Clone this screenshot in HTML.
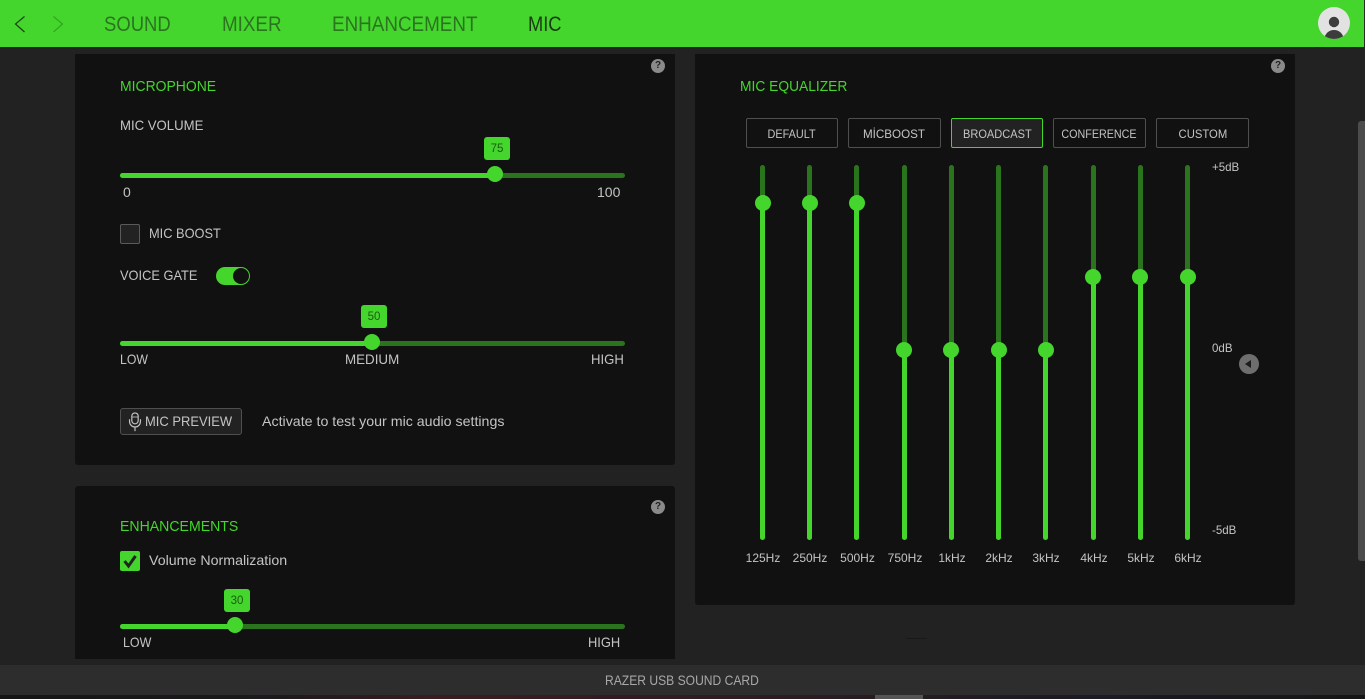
<!DOCTYPE html>
<html>
<head>
<meta charset="utf-8">
<style>
html,body{margin:0;padding:0;width:1365px;height:699px;overflow:hidden;background:#222;}
body{position:relative;font-family:"Liberation Sans",sans-serif;color:#c4c4c4;}
div,svg{position:absolute;}
.t{white-space:nowrap;font-size:14px;line-height:16px;transform-origin:0 50%;}
.nav{font-size:21px;line-height:24px;top:13px;color:#2b7420;transform-origin:0 50%;white-space:nowrap;}
.panel{background:#111;}
.h{color:#44d62c;font-size:15px;line-height:18px;white-space:nowrap;transform-origin:0 50%;}
.track{height:5px;border-radius:3px;background:#2a741e;}
.fill{height:5px;border-radius:3px;background:#44d62c;}
.thumb{width:16px;height:16px;border-radius:50%;background:#44d62c;}
.badge{width:26px;height:23px;border-radius:3px;background:#44d62c;color:#1a5c10;font-size:11.5px;line-height:25px;text-align:center;}
.q{width:14px;height:14px;border-radius:50%;background:#8a8a8a;color:#222;font-size:10px;line-height:14px;text-align:center;font-weight:bold;}
.btn{box-sizing:border-box;height:30px;top:118px;border:1px solid #4f4f4f;border-radius:2px;color:#c4c4c4;font-size:12px;line-height:31px;text-align:center;white-space:nowrap;}
.btn span{display:inline-block;}
.v{width:5px;top:165px;height:375px;border-radius:3px;background:#2a741e;}
.vf{width:5px;bottom:159px;border-radius:3px;background:#44d62c;}
.hz{font-size:12px;line-height:14px;top:551px;width:50px;text-align:center;color:#c4c4c4;}
.db{font-size:12px;line-height:14px;color:#c4c4c4;white-space:nowrap;}
</style>
</head>
<body>
<!-- header -->
<div style="left:0;top:0;width:1365px;height:47px;background:#44d62c;"></div>
<svg style="left:12px;top:14px;" width="16" height="20" viewBox="0 0 16 20"><path d="M12.5 2.5 L3.5 10 L12.5 18" fill="none" stroke="#1d3f18" stroke-width="1.2"/></svg>
<svg style="left:50px;top:14px;" width="16" height="20" viewBox="0 0 16 20"><path d="M3.5 2.5 L12.5 10 L3.5 18" fill="none" stroke="#2fa81e" stroke-width="1.2"/></svg>
<div class="nav" style="left:104px;transform:scaleX(.88);">SOUND</div>
<div class="nav" style="left:222px;transform:scaleX(.895);">MIXER</div>
<div class="nav" style="left:332px;transform:scaleX(.897);">ENHANCEMENT</div>
<div class="nav" style="left:528px;color:#1a3a15;transform:scaleX(.87);">MIC</div>
<svg style="left:1318px;top:7px;" width="32" height="32" viewBox="0 0 32 32"><defs><clipPath id="c"><circle cx="16" cy="16" r="16"/></clipPath></defs><circle cx="16" cy="16" r="16" fill="#e2e2e2"/><circle cx="16" cy="15" r="5.2" fill="#3c3c3c"/><ellipse cx="16" cy="32" rx="9.5" ry="9" fill="#3c3c3c" clip-path="url(#c)"/></svg>

<!-- microphone panel -->
<div class="panel" style="left:75px;top:54px;width:600px;height:411px;border-radius:0 0 3px 3px;"></div>
<div class="q" style="left:651px;top:59px;">?</div>
<div class="h" style="left:120px;top:78px;transform:scaleX(.93);">MICROPHONE</div>
<div class="t" style="left:120px;top:117px;transform:scaleX(.94);">MIC VOLUME</div>
<div class="badge" style="left:484px;top:137px;">75</div>
<div class="track" style="left:120px;top:173px;width:505px;"></div>
<div class="fill" style="left:120px;top:173px;width:375px;"></div>
<div class="thumb" style="left:487px;top:166px;"></div>
<div class="t" style="left:123px;top:184px;">0</div>
<div class="t" style="left:597px;top:184px;">100</div>
<div style="box-sizing:border-box;left:120px;top:224px;width:20px;height:20px;background:#222;border:1px solid #5a5a5a;border-radius:2px;"></div>
<div class="t" style="left:149px;top:225px;transform:scaleX(.915);">MIC BOOST</div>
<div class="t" style="left:120px;top:267px;transform:scaleX(.916);">VOICE GATE</div>
<div style="left:216px;top:267px;width:34px;height:18px;border-radius:9px;background:#44d62c;"></div>
<div style="left:233px;top:268px;width:16px;height:16px;border-radius:50%;background:#111;"></div>
<div class="badge" style="left:361px;top:305px;">50</div>
<div class="track" style="left:120px;top:341px;width:505px;"></div>
<div class="fill" style="left:120px;top:341px;width:252px;"></div>
<div class="thumb" style="left:364px;top:334px;"></div>
<div class="t" style="left:120px;top:351px;transform:scaleX(.875);">LOW</div>
<div class="t" style="left:345px;top:351px;transform:scaleX(.955);">MEDIUM</div>
<div class="t" style="left:591px;top:351px;transform:scaleX(.94);">HIGH</div>
<div style="box-sizing:border-box;left:120px;top:408px;width:122px;height:27px;background:#222;border:1px solid #4f4f4f;border-radius:3px;"></div>
<svg style="left:127px;top:412px;" width="16" height="20" viewBox="0 0 16 22"><rect x="4.5" y="1" width="7" height="12" rx="3.5" fill="none" stroke="#c4c4c4" stroke-width="1.3"/><path d="M4.5 5.5H11.5" stroke="#c4c4c4" stroke-width=".9"/><path d="M2 8v2.5a6 6 0 0 0 12 0V8M8 16.5v4.5" fill="none" stroke="#c4c4c4" stroke-width="1.3"/></svg>
<div class="t" style="left:144.5px;top:413px;transform:scaleX(.925);">MIC PREVIEW</div>
<div class="t" style="left:262px;top:413px;transform:scaleX(1.015);">Activate to test your mic audio settings</div>

<!-- enhancements panel -->
<div class="panel" style="left:75px;top:486px;width:600px;height:173px;border-radius:3px 3px 0 0;"></div>
<div class="q" style="left:651px;top:500px;">?</div>
<div class="h" style="left:120px;top:518px;transform:scaleX(.94);">ENHANCEMENTS</div>
<div style="left:120px;top:551px;width:20px;height:20px;background:#44d62c;border-radius:2px;"></div>
<svg style="left:120px;top:551px;" width="20" height="20" viewBox="0 0 20 20"><path d="M4.5 10 L8.5 15 L15.5 5" fill="none" stroke="#222" stroke-width="3"/></svg>
<div class="t" style="left:149px;top:552px;transform:scaleX(1.015);">Volume Normalization</div>
<div class="badge" style="left:224px;top:589px;">30</div>
<div class="track" style="left:120px;top:624px;width:505px;"></div>
<div class="fill" style="left:120px;top:624px;width:115px;"></div>
<div class="thumb" style="left:227px;top:617px;"></div>
<div class="t" style="left:123px;top:634px;transform:scaleX(.89);">LOW</div>
<div class="t" style="left:588px;top:634px;transform:scaleX(.92);">HIGH</div>

<!-- equalizer panel -->
<div class="panel" style="left:695px;top:54px;width:600px;height:551px;border-radius:0 0 3px 3px;"></div>
<div class="q" style="left:1271px;top:59px;">?</div>
<div class="h" style="left:740px;top:78px;transform:scaleX(.92);">MIC EQUALIZER</div>
<div class="btn" style="left:746px;width:92px;"><span style="transform:scaleX(.905);">DEFAULT</span></div>
<div class="btn" style="left:848px;width:93px;"><span style="transform:scaleX(.97);">MİCBOOST</span></div>
<div class="btn" style="left:951px;width:92px;background:#222;border-color:#44d62c;"><span style="transform:scaleX(.92);">BROADCAST</span></div>
<div class="btn" style="left:1053px;width:93px;"><span style="transform:scaleX(.895);">CONFERENCE</span></div>
<div class="btn" style="left:1156px;width:93px;"><span style="transform:scaleX(.94);">CUSTOM</span></div>

<div class="v" style="left:760px;"></div><div class="vf" style="left:760px;height:337px;"></div><div class="thumb" style="left:755px;top:195px;"></div><div class="hz" style="left:738px;">125Hz</div>
<div class="v" style="left:807px;"></div><div class="vf" style="left:807px;height:337px;"></div><div class="thumb" style="left:802px;top:195px;"></div><div class="hz" style="left:785px;">250Hz</div>
<div class="v" style="left:854px;"></div><div class="vf" style="left:854px;height:337px;"></div><div class="thumb" style="left:849px;top:195px;"></div><div class="hz" style="left:832.5px;">500Hz</div>
<div class="v" style="left:902px;"></div><div class="vf" style="left:902px;height:190px;"></div><div class="thumb" style="left:896px;top:342px;"></div><div class="hz" style="left:880px;">750Hz</div>
<div class="v" style="left:949px;"></div><div class="vf" style="left:949px;height:190px;"></div><div class="thumb" style="left:943px;top:342px;"></div><div class="hz" style="left:927px;">1kHz</div>
<div class="v" style="left:996px;"></div><div class="vf" style="left:996px;height:190px;"></div><div class="thumb" style="left:991px;top:342px;"></div><div class="hz" style="left:974px;">2kHz</div>
<div class="v" style="left:1043px;"></div><div class="vf" style="left:1043px;height:190px;"></div><div class="thumb" style="left:1038px;top:342px;"></div><div class="hz" style="left:1021px;">3kHz</div>
<div class="v" style="left:1091px;"></div><div class="vf" style="left:1091px;height:263px;"></div><div class="thumb" style="left:1085px;top:269px;"></div><div class="hz" style="left:1069px;">4kHz</div>
<div class="v" style="left:1138px;"></div><div class="vf" style="left:1138px;height:263px;"></div><div class="thumb" style="left:1132px;top:269px;"></div><div class="hz" style="left:1116px;">5kHz</div>
<div class="v" style="left:1185px;"></div><div class="vf" style="left:1185px;height:263px;"></div><div class="thumb" style="left:1180px;top:269px;"></div><div class="hz" style="left:1163px;">6kHz</div>

<div class="db" style="left:1212px;top:160px;transform:scaleX(.96);transform-origin:0 50%;">+5dB</div>
<div class="db" style="left:1212px;top:341px;transform:scaleX(.96);transform-origin:0 50%;">0dB</div>
<div class="db" style="left:1212px;top:523px;transform:scaleX(.96);transform-origin:0 50%;">-5dB</div>
<div style="left:1239px;top:354px;width:20px;height:20px;border-radius:50%;background:#6e6e6e;"></div>
<svg style="left:1239px;top:354px;" width="20" height="20" viewBox="0 0 20 20"><path d="M6 10 L12 6 V14 Z" fill="#1c1c1c"/></svg>

<!-- scrollbar -->
<div style="left:1358px;top:121px;width:7px;height:440px;background:#4c4c4c;border-radius:3px 0 0 3px;"></div>
<div style="left:1364px;top:0;width:1px;height:47px;background:#2a2a2a;"></div>
<div style="left:906px;top:638px;width:21px;height:1px;background:#191919;"></div>

<!-- footer -->
<div style="left:0;top:665px;width:1365px;height:30px;background:#2d2d2d;"></div>
<div style="left:0;top:695px;width:1365px;height:4px;background:linear-gradient(90deg,#161616 0,#1c1a1c 20%,#3a1c20 32%,#2a1c22 60%,#1c1a24 80%,#161616 100%);"></div>
<div style="left:875px;top:695px;width:48px;height:4px;background:#555;"></div>
<div class="t" style="left:605px;top:672px;color:#a8a8a8;transform:scaleX(.864);">RAZER USB SOUND CARD</div>
</body>
</html>
